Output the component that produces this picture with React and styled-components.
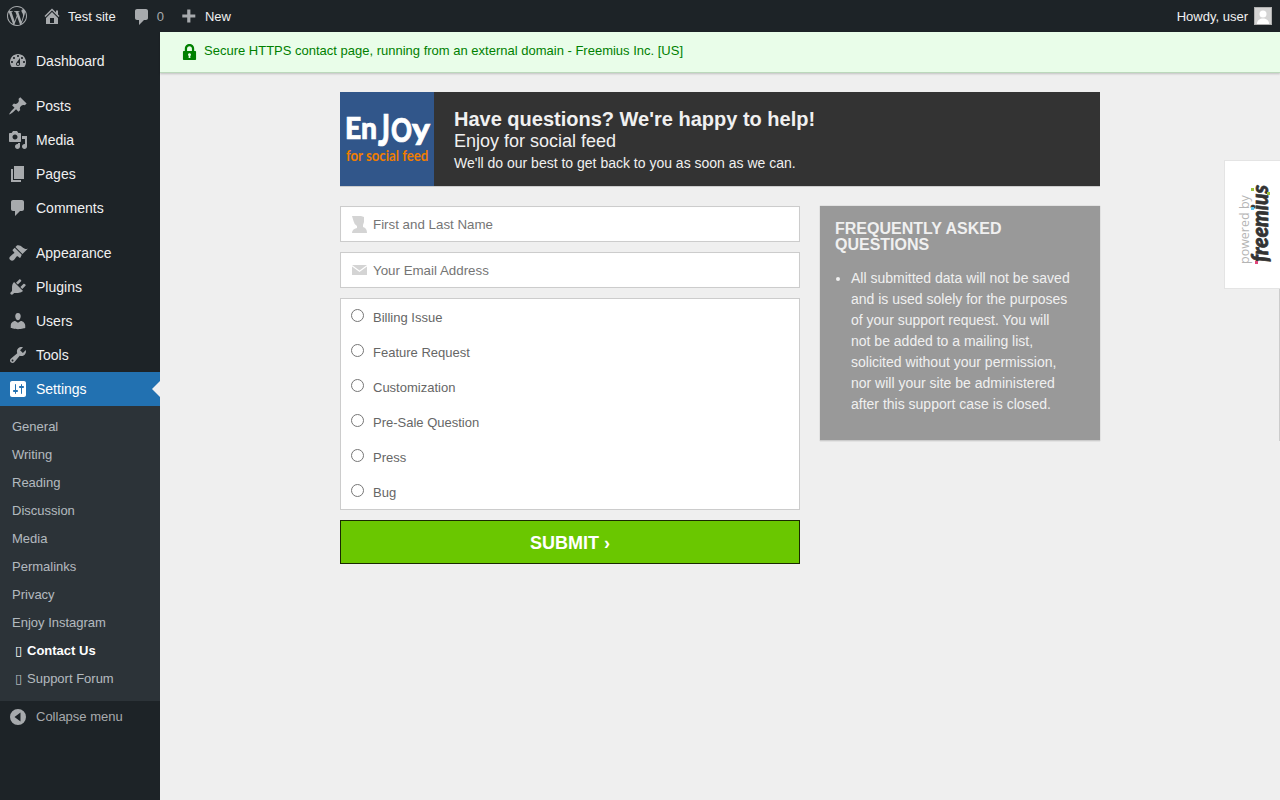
import React from 'react';
import styled, { createGlobalStyle } from 'styled-components';
import { SiWordpress } from 'react-icons/si';

const Global = createGlobalStyle`
  html, body { margin: 0; padding: 0; height: 100%; background: #fff; }
  body { font-family: "Liberation Sans", Arial, sans-serif; overflow: hidden; }
  #root { height: 100%; }
  * { box-sizing: border-box; }
`;

const Page = styled.div`
  width: 1280px;
  height: 800px;
  display: grid;
  grid-template-rows: 32px 1fr;
  grid-template-columns: 160px 1fr;
  overflow: hidden;
`;
const AdminBar = styled.header`
  grid-column: 1 / 3;
  background: #1d2327;
  display: flex;
  align-items: center;
  justify-content: space-between;
  font-size: 13px;
  color: #f0f0f1;
  padding: 0 8px 0 7px;
`;
const BarGroup = styled.div`
  display: flex;
  align-items: center;
`;
const BarItem = styled.span`
  display: flex;
  align-items: center;
  gap: ${p => p.$gap ?? 6}px;
  margin-right: ${p => p.$mr ?? 0}px;
  color: ${p => p.$muted ? '#a7aaad' : '#f0f0f1'};
`;
const BarIcon = styled.svg`
  width: 20px;
  height: 20px;
  fill: #a7aaad;
  display: block;
  margin-top: ${p => p.$down ?? 0}px;
`;
const Avatar = styled.span`
  width: 18px;
  height: 18px;
  margin-left: 6px;
  background: #d0d0d0;
  border: 1px solid #b0b0b0;
  display: block;
  overflow: hidden;
`;
const Sidebar = styled.nav`
  background: #1d2327;
  padding-top: 12px;
  font-size: 14px;
`;
const MenuRow = styled.div`
  position: relative;
  height: 34px;
  display: flex;
  align-items: center;
  padding-left: 8px;
  gap: 8px;
  margin-bottom: ${p => p.$sep ? 11 : 0}px;
  color: ${p => p.$active ? '#fff' : '#f0f0f1'};
  background: ${p => p.$active ? '#2271b1' : 'transparent'};
  ${p => p.$active && `
    &::after {
      content: "";
      position: absolute;
      right: 0;
      top: 9px;
      border: 8px solid transparent;
      border-right-color: #f0f0f1;
    }
  `}
`;
const MenuIcon = styled.svg`
  width: 20px;
  height: 20px;
  flex: none;
  fill: ${p => p.$active ? '#fff' : '#a7aaad'};
`;
const SubMenu = styled.div`
  background: #2c3338;
  padding: 6px 0 9px;
  font-size: 13px;
`;
const SubItem = styled.div`
  height: 28px;
  display: flex;
  align-items: center;
  padding-left: ${p => p.$nested ? 17 : 12}px;
  color: ${p => p.$current ? '#fff' : 'rgba(240,246,252,.7)'};
  font-weight: ${p => p.$current ? 700 : 400};
`;
const Tofu = styled.span`
  width: 10px;
  flex: none;
  font-family: "DejaVu Sans", sans-serif;
  font-size: 13px;
  font-weight: 400;
  margin-left: -2px;
  margin-right: 2px;
`;
const Collapse = styled.div`
  display: flex;
  align-items: flex-start;
  gap: 8px;
  padding: 6px 0 0 8px;
  font-size: 13px;
  line-height: 20px;
  color: #a7aaad;
`;
const Main = styled.main`
  position: relative;
  background: #efefef;
  min-width: 0;
`;
const Notice = styled.div`
  height: 41px;
  background: #e9fde9;
  border-bottom: 1px solid #bcd8bc;
  box-shadow: 0 1px 2px rgba(0,0,0,.2);
  display: flex;
  align-items: flex-start;
  padding: 11px 0 0 22px;
  gap: 7px;
  color: #008000;
  font-size: 13px;
  line-height: 15px;
`;
const LockIcon = styled.svg`
  width: 15px;
  height: 18px;
  fill: #008000;
  flex: none;
`;
const Content = styled.div`
  width: 760px;
  margin: 19px auto 0;
`;
const Banner = styled.section`
  height: 95px;
  display: flex;
  background: #333;
  border-bottom: 1px solid #ccc;
  color: #f0f0f0;
`;
const Logo = styled.svg`
  width: 94px;
  height: 94px;
  display: block;
  flex: none;
`;
const BannerText = styled.div`
  padding: 15px 0 0 20px;
`;
const BannerTitle = styled.h1`
  margin: 0;
  font-size: 20px;
  line-height: 24px;
  font-weight: 700;
`;
const BannerSub = styled.div`
  font-size: 18px;
  line-height: 20px;
`;
const BannerNote = styled.div`
  font-size: 14px;
  line-height: 16px;
  margin-top: 4px;
`;
const Columns = styled.div`
  display: grid;
  grid-template-columns: 460px 280px;
  gap: 20px;
  margin-top: 19px;
  align-items: start;
`;
const Form = styled.form`
  display: flex;
  flex-direction: column;
  gap: 10px;
`;
const Field = styled.label`
  height: 36px;
  background: #fff;
  border: 1px solid #ccc;
  box-shadow: inset 0 0 1px rgba(0,0,0,.05);
  display: flex;
  align-items: center;
  padding-left: 10px;
  gap: 5px;
`;
const FieldIcon = styled.svg`
  width: 17px;
  height: 18px;
  fill: #d4d4d4;
  flex: none;
`;
const TextInput = styled.input`
  border: 0;
  outline: 0;
  flex: 1;
  padding: 0;
  font: 13.33px "Liberation Sans", Arial, sans-serif;
  background: transparent;
  &::placeholder { color: #757575; opacity: 1; }
`;
const RadioBox = styled.div`
  background: #fff;
  border: 1px solid #ccc;
  height: 212px;
  padding-top: 1px;
`;
const RadioRow = styled.label`
  height: 35px;
  display: flex;
  align-items: center;
  padding-left: 10px;
  font-size: 13px;
  color: #666;
  input { margin: 0 9px 4px 0; width: 13px; height: 13px; flex: none; }
`;
const Submit = styled.button`
  height: 44px;
  background: #6ac700;
  border: 1px solid #1a2a00;
  color: #fff;
  font: 700 18px "Liberation Sans", Arial, sans-serif;
  padding: 2px 0 0;
`;
const Faq = styled.aside`
  height: 235px;
  background: #999;
  border-bottom: 1px solid #ccc;
  box-shadow: 0 0 1px rgba(0,0,0,.3);
  color: #f0f0f0;
  padding: 15px 15px 0;
`;
const FaqTitle = styled.h2`
  margin: 0;
  font-size: 16px;
  line-height: 16px;
  font-weight: 700;
  text-transform: uppercase;
`;
const FaqList = styled.ul`
  margin: 15px 0 0;
  padding: 0 14px 0 16px;
  font-size: 14px;
  line-height: 21px;
`;
const Tab = styled.aside`
  position: absolute;
  top: 128px;
  right: 0;
  width: 56px;
  height: 129px;
  background: #fff;
  border: 1px solid #e4e4e4;
  border-right: 0;
`;
const EdgeLine = styled.span`
  position: absolute;
  right: 0;
  top: 257px;
  width: 1px;
  height: 152px;
  background: #ccc;
`;
const TabLogo = styled.svg`
  width: 55px;
  height: 127px;
  display: block;
`;

const d = {
  dash: 'M3.76 16h12.48c1.1-1.37 1.76-3.11 1.76-5 0-4.42-3.58-8-8-8s-8 3.58-8 8c0 1.89.66 3.63 1.76 5zM10 4c.55 0 1 .45 1 1s-.45 1-1 1-1-.45-1-1 .45-1 1-1zM6 6c.55 0 1 .45 1 1s-.45 1-1 1-1-.45-1-1 .45-1 1-1zm8 0c.55 0 1 .45 1 1s-.45 1-1 1-1-.45-1-1 .45-1 1-1zm-5.37 5.55L12 7v6c0 1.1-.9 2-2 2s-2-.9-2-2c0-.57.24-1.08.63-1.45zM4 10c.55 0 1 .45 1 1s-.45 1-1 1-1-.45-1-1 .45-1 1-1zm12 0c.55 0 1 .45 1 1s-.45 1-1 1-1-.45-1-1 .45-1 1-1zm-5 3c0-.55-.45-1-1-1s-1 .45-1 1 .45 1 1 1 1-.45 1-1z',
  post: 'M10.44 3.02l1.82-1.82 6.36 6.35-1.83 1.82c-1.05-.68-2.48-.57-3.41.36l-.75.75c-.92.93-1.04 2.35-.35 3.41l-1.83 1.82-2.41-2.41-2.8 2.79c-.42.42-3.38 2.71-3.8 2.29s1.86-3.39 2.28-3.81l2.79-2.79L4.1 9.36l1.83-1.82c1.05.69 2.48.57 3.4-.36l.75-.75c.93-.92 1.05-2.35.36-3.41z',
  media: 'M13 11V4c0-.55-.45-1-1-1h-1.67L9 1H5L3.67 3H2c-.55 0-1 .45-1 1v7c0 .55.45 1 1 1h10c.55 0 1-.45 1-1zM7 4.5c1.38 0 2.5 1.12 2.5 2.5S8.38 9.5 7 9.5 4.5 8.38 4.5 7 5.62 4.5 7 4.5zM14 6h5v10.5c0 1.38-1.12 2.5-2.5 2.5S14 17.88 14 16.5s1.12-2.5 2.5-2.5c.17 0 .34.02.5.05V9h-3V6zm-4 8.05V13h2v3.5c0 1.38-1.12 2.5-2.5 2.5S7 17.88 7 16.5 8.12 14 9.5 14c.17 0 .34.02.5.05z',
  page: 'M6 15V2h10v13H6zm-1 1h8v2H3V5h2v11z',
  comment: 'M5 2h9c1.1 0 2 .9 2 2v7c0 1.1-.9 2-2 2h-2l-5 5v-5H5c-1.1 0-2-.9-2-2V4c0-1.1.9-2 2-2z',
  appearance: 'M14.48 11.06L7.41 3.99l1.5-1.5c.5-.56 2.3-.47 3.51.32 1.21.8 1.43 1.28 2.91 2.1 1.18.64 2.45 1.26 4.45.85zm-.71.71L6.7 4.7 4.93 6.47c-.39.39-.39 1.02 0 1.41l1.06 1.06c.39.39.39 1.03 0 1.42-.6.6-1.43 1.11-2.21 1.69-.35.26-.7.53-1.01.84C1.43 13.71.96 15.12 1.65 16.3c.26.44.62.8 1.06 1.06 1.17.68 2.58.21 3.41-.62.3-.31.58-.66.84-1.01.58-.78 1.09-1.61 1.69-2.21.39-.39 1.02-.39 1.41 0l1.06 1.06c.39.39 1.02.39 1.41 0z',
  plugin: 'M13.11 4.36L9.87 7.6 8 5.73l3.24-3.24c.35-.34 1.05-.2 1.56.32.52.51.66 1.21.31 1.55zm-8 1.77l.91-1.12 9.01 9.01-1.19.84c-.71.71-2.63 1.16-3.82 1.16H6.14L4.9 17.26c-.59.59-1.54.59-2.12 0-.59-.58-.59-1.53 0-2.12l1.24-1.24v-3.88c0-1.13.4-3.19 1.09-3.89zm7.26 3.97l3.24-3.24c.34-.35 1.04-.21 1.55.31.52.51.66 1.21.31 1.55l-3.24 3.25z',
  users: 'M10 9.25c-2.27 0-2.73-3.44-2.73-3.44C7 4.02 7.82 2 9.97 2c2.16 0 2.98 2.02 2.71 3.81 0 0-.41 3.44-2.68 3.44zm0 2.57L12.72 10c2.39 0 4.52 2.33 4.52 4.53v2.49s-3.65 1.13-7.24 1.13c-3.65 0-7.24-1.13-7.24-1.13v-2.49c0-2.25 1.94-4.48 4.47-4.48z',
  tools: 'M16.68 9.77c-1.34 1.34-3.3 1.67-4.95.99l-5.41 6.52c-.99.99-2.59.99-3.58 0s-.99-2.59 0-3.57l6.52-5.42c-.68-1.65-.35-3.61.99-4.95 1.28-1.28 3.12-1.62 4.72-1.06l-2.89 2.89 2.82 2.82 2.86-2.87c.53 1.58.18 3.39-1.08 4.65zM3.81 16.21c.4.39 1.04.39 1.43 0 .4-.4.4-1.04 0-1.43-.39-.4-1.03-.4-1.43 0-.39.39-.39 1.03 0 1.43z',
  settings: 'M18 16V4c0-1.1-.9-2-2-2H4c-1.1 0-2 .9-2 2v12c0 1.1.9 2 2 2h12c1.1 0 2-.9 2-2zM8 11h1c.55 0 1 .45 1 1s-.45 1-1 1H8v1.5c0 .28-.22.5-.5.5s-.5-.22-.5-.5V13H6c-.55 0-1-.45-1-1s.45-1 1-1h1V5.5c0-.28.22-.5.5-.5s.5.22.5.5V11zm5-2h-1c-.55 0-1-.45-1-1s.45-1 1-1h1V5.5c0-.28.22-.5.5-.5s.5.22.5.5V7h1c.55 0 1 .45 1 1s-.45 1-1 1h-1v5.5c0 .28-.22.5-.5.5s-.5-.22-.5-.5V9z',
  home: 'M16 8.5l1.53 1.53-1.06 1.06L10 4.62l-6.47 6.47-1.06-1.06L10 2.5l4 4v-2h2v4zm-6-2.46l6 5.99V18H4v-6.03zM12 17v-5H8v5h4z',
  plus: 'M8.2 3.500h3.200v4.900h4.900v3.200h-4.900v4.900H8.200v-4.900H3.300V8.400h4.900z',
  collapse: 'M10 2a8 8 0 1 1 0 16 8 8 0 0 1 0-16zm2.5 3.500L6.500 10l6 4.500z',
  lock: 'M13 8.500h1.200c.5 0 .8.4.8.8v8c0 .5-.4.8-.8.8H1.800c-.5 0-.8-.4-.8-.8v-8c0-.5.4-.8.8-.8H3V6c0-2.800 2.200-5 5-5s5 2.200 5 5zm-2.400 0V6C10.600 4.500 9.500 3.400 8 3.400S5.400 4.500 5.400 6v2.500zM9 16l-.2-2.200c.5-.2.8-.7.8-1.300 0-.9-.7-1.600-1.600-1.600s-1.600.7-1.600 1.600c0 .6.3 1.100.8 1.300L7 16z',
};

const Ico = ({ name, active }) => (
  <MenuIcon viewBox="0 0 20 20" $active={active}><path fillRule="evenodd" d={d[name]} /></MenuIcon>
);

const topMenu = [
  { icon: 'post', label: 'Posts' },
  { icon: 'media', label: 'Media' },
  { icon: 'page', label: 'Pages' },
  { icon: 'comment', label: 'Comments', sep: true },
  { icon: 'appearance', label: 'Appearance' },
  { icon: 'plugin', label: 'Plugins' },
  { icon: 'users', label: 'Users' },
  { icon: 'tools', label: 'Tools' },
];
const subMenu = ['General', 'Writing', 'Reading', 'Discussion', 'Media', 'Permalinks', 'Privacy', 'Enjoy Instagram'];
const reasons = ['Billing Issue', 'Feature Request', 'Customization', 'Pre-Sale Question', 'Press', 'Bug'];

export default function App() {
  return (
    <Page>
      <Global />
      <AdminBar>
        <BarGroup>
          <BarItem $mr={15}><SiWordpress size={20} color="#a7aaad" /></BarItem>
          <BarItem $mr={16}><BarIcon viewBox="0 0 20 20"><path fillRule="evenodd" d={d.home} /></BarIcon>Test site</BarItem>
          <BarItem $mr={15} $gap={5} $muted><BarIcon $down={2} viewBox="0 0 20 20"><path d={d.comment} /></BarIcon>0</BarItem>
          <BarItem><BarIcon viewBox="0 0 20 20"><path d={d.plus} /></BarIcon>New</BarItem>
        </BarGroup>
        <BarGroup>
          <BarItem $gap={0}>Howdy, user
            <Avatar>
              <svg width="16" height="16" viewBox="0 0 16 16"><rect width="16" height="16" fill="#d4d4d4" /><circle cx="8" cy="6" r="3.500" fill="#fff" /><path d="M2 16c0-4 3-5.500 6-5.500s6 1.500 6 5.500z" fill="#fff" /></svg>
            </Avatar>
          </BarItem>
        </BarGroup>
      </AdminBar>
      <Sidebar>
        <MenuRow $sep><Ico name="dash" />Dashboard</MenuRow>
        {topMenu.map(m => <MenuRow key={m.label} $sep={m.sep}><Ico name={m.icon} />{m.label}</MenuRow>)}
        <MenuRow $active><Ico name="settings" active />Settings</MenuRow>
        <SubMenu>
          {subMenu.map(s => <SubItem key={s}>{s}</SubItem>)}
          <SubItem $nested $current><Tofu>▯</Tofu>Contact Us</SubItem>
          <SubItem $nested><Tofu>▯</Tofu>Support Forum</SubItem>
        </SubMenu>
        <Collapse><Ico name="collapse" />Collapse menu</Collapse>
      </Sidebar>
      <Main>
        <Notice>
          <LockIcon viewBox="0 0 16 19"><path fillRule="evenodd" d={d.lock} /></LockIcon>
          Secure HTTPS contact page, running from an external domain - Freemius Inc. [US]
        </Notice>
        <Content>
          <Banner>
            <Logo viewBox="0 0 94 94">
              <rect width="94" height="94" fill="#31568a" />
              <text x="5" y="47" fontFamily="Lato, sans-serif" fontWeight="900" fontSize="30" fill="#fff" stroke="#fff" strokeWidth=".7" textLength="32" lengthAdjust="spacingAndGlyphs">En</text>
              <text x="38" y="54" fontFamily="Lato, sans-serif" fontWeight="900" fontSize="44" fill="#fff" stroke="#fff" strokeWidth=".7" textLength="12" lengthAdjust="spacingAndGlyphs">J</text>
              <text x="51" y="50" fontFamily="Lato, sans-serif" fontWeight="900" fontSize="32" fill="#fff" stroke="#fff" strokeWidth=".7" textLength="21" lengthAdjust="spacingAndGlyphs">O</text>
              <text x="72" y="48" fontFamily="Lato, sans-serif" fontWeight="900" fontSize="30" fill="#fff" stroke="#fff" strokeWidth=".7" textLength="18" lengthAdjust="spacingAndGlyphs">y</text>
              <text transform="translate(6 69) scale(1 1.2)" fontFamily="Lato, sans-serif" fontWeight="700" fontSize="13.200" fill="#f07d00">for social feed</text>
            </Logo>
            <BannerText>
              <BannerTitle>Have questions? We're happy to help!</BannerTitle>
              <BannerSub>Enjoy for social feed</BannerSub>
              <BannerNote>We'll do our best to get back to you as soon as we can.</BannerNote>
            </BannerText>
          </Banner>
          <Columns>
            <Form>
              <Field>
                <FieldIcon viewBox="0 0 17 18"><path d="M1 1H10L13 2 13 7 12 10 12 12Q16 13 16 18H1Q1 14 6 13L6 11Q3 9 2.500 6Z" /></FieldIcon>
                <TextInput placeholder="First and Last Name" />
              </Field>
              <Field>
                <FieldIcon viewBox="0 0 17 18"><path d="M1 4h15L8.500 9.500zM1 5.500 8.500 11 16 5.500V14H1z" /></FieldIcon>
                <TextInput placeholder="Your Email Address" />
              </Field>
              <RadioBox>
                {reasons.map(r => <RadioRow key={r}><input type="radio" name="reason" /><span>{r}</span></RadioRow>)}
              </RadioBox>
              <Submit type="button">SUBMIT ›</Submit>
            </Form>
            <Faq>
              <FaqTitle>Frequently Asked Questions</FaqTitle>
              <FaqList>
                <li>All submitted data will not be saved and is used solely for the purposes of your support request. You will not be added to a mailing list, solicited without your permission, nor will your site be administered after this support case is closed.</li>
              </FaqList>
            </Faq>
          </Columns>
        </Content>
        <Tab>
          <TabLogo viewBox="0 0 55 127">
            <text transform="translate(24 103) rotate(-90)" fontFamily="Open Sans, sans-serif" fontSize="12.500" fill="#b4b4b4">powered by</text>
            <text transform="translate(43 101) rotate(-90) scale(1 1.250)" fontFamily="Lato, sans-serif" fontWeight="900" fontStyle="italic" fontSize="18" fill="#333" stroke="#333" strokeWidth=".6" textLength="77" lengthAdjust="spacingAndGlyphs">freemius</text>
            <rect x="26" y="46" width="3" height="3" fill="#5cc4ee" />
            <rect x="26" y="27" width="3" height="3" fill="#9bc13c" />
            <rect x="42" y="31" width="3" height="3" fill="#9bc13c" />
            <rect x="30" y="100" width="3" height="3" fill="#e0457b" />
          </TabLogo>
        </Tab>
        <EdgeLine />
      </Main>
    </Page>
  );
}
